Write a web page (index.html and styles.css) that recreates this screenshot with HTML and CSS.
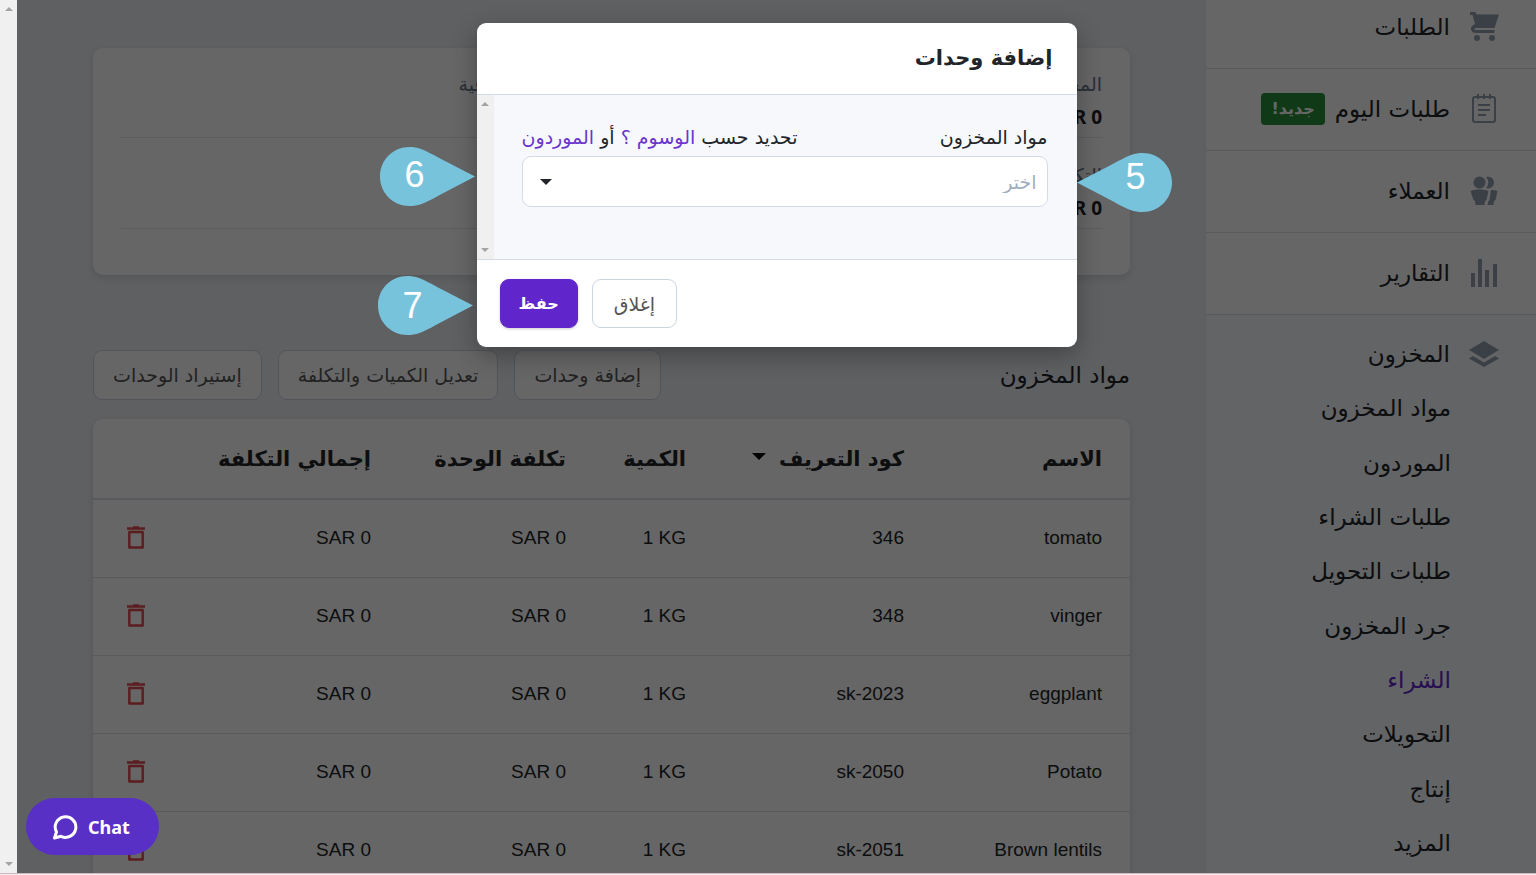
FILE: index.html
```html
<!DOCTYPE html>
<html lang="ar" dir="rtl">

<head>
  <meta charset="UTF-8">
  <meta name="viewport" content="width=device-width, initial-scale=1.0">
  <title>إضافة وحدات</title>
  <link rel="stylesheet" href="styles.css">
</head>

<body>
  <svg class="sprite" aria-hidden="true">
    <symbol id="trash" viewBox="0 0 20 24">
      <path d="M1 2.500h18M7 1.500h6" fill="none" stroke="currentColor" stroke-width="2.400"/>
      <path d="M3.300 6h13.400v15.500H3.300z" fill="none" stroke="currentColor" stroke-width="2.400" stroke-linejoin="round"/>
    </symbol>
    <symbol id="drop" viewBox="0 0 95 59">
      <path d="M95 29.500L63 13C54 8 46 4 41 2 37 .5 33 0 29.500 0 13 0 0 13 0 29.500S13 59 29.500 59c4 0 8-.5 12-2 5-2 13-6 22-11z" fill="#78c3dc"/>
    </symbol>
  </svg>

  <div class="app">
    <aside class="sidebar">
      <nav class="menu">
        <a class="menu-item" href="#">
          <svg class="icon" viewBox="0 0 30 30"><path d="M1 0h5.500l1 2.500H30L25.500 16H7c-2 0-2 2 0 2h18.500v3H7c-6 0-6.500-6.500-2.500-8L6 12 3.500 3H1z"/><circle cx="8" cy="26" r="3"/><circle cx="23" cy="26" r="3"/></svg>
          <span>الطلبات</span>
        </a>
        <a class="menu-item" href="#">
          <svg class="icon line" viewBox="0 0 30 30"><rect x="4" y="3" width="22" height="25" rx="2"/><path d="M9 0v5M15 0v5M21 0v5M9 11h12M9 16h12M9 21h8"/></svg>
          <span>طلبات اليوم</span>
          <span class="badge">جديد!</span>
        </a>
        <a class="menu-item" href="#">
          <svg class="icon" viewBox="0 0 30 30"><circle cx="10.500" cy="6.500" r="6"/><path d="M17 1c5-1.500 8 2 8 5.500s-3 7-8 5.500c3-3 3-8 0-11zM1.500 15c5-2 13-2 18 0l-2 9-1.500 1-.5 4h-9L6 25l-1.500-1zM22 14c2 0 4 0 6.500 1l-2 9-1.500 1-.5 4h-6l1-4 1-1z"/></svg>
          <span>العملاء</span>
        </a>
        <a class="menu-item" href="#">
          <svg class="icon" viewBox="0 0 30 30"><path d="M2 15h4v14H2zM9 1h4v28H9zM16 12h4v17h-4zM24 6h4v23h-4z"/></svg>
          <span>التقارير</span>
        </a>
      </nav>
      <nav class="submenu">
        <a class="submenu-head" href="#">
          <svg class="icon" viewBox="0 0 30 30"><path d="M15 2l15 9-15 9L0 11zM4 17l11 6.500L26 17l4 2.500L15 28 0 19.500z"/></svg>
          <span>المخزون</span>
        </a>
        <a href="#">مواد المخزون</a>
        <a href="#">الموردون</a>
        <a href="#">طلبات الشراء</a>
        <a href="#">طلبات التحويل</a>
        <a href="#">جرد المخزون</a>
        <a class="active" href="#">الشراء</a>
        <a href="#">التحويلات</a>
        <a href="#">إنتاج</a>
        <a href="#">المزيد</a>
      </nav>
    </aside>

    <main class="content">
      <section class="card summary">
        <dl class="summary-row">
          <div>
            <dt>المجموع الفرعي</dt>
            <dd dir="ltr">SAR 0</dd>
          </div>
          <div>
            <dt>التكاليف الإضافية</dt>
          </div>
        </dl>
        <dl class="summary-row">
          <div>
            <dt>التكلفة الإضافية</dt>
            <dd dir="ltr">SAR 0</dd>
          </div>
        </dl>
      </section>

      <header class="toolbar">
        <h2>مواد المخزون</h2>
        <div class="toolbar-buttons">
          <button class="btn" type="button">إضافة وحدات</button>
          <button class="btn" type="button">تعديل الكميات والتكلفة</button>
          <button class="btn" type="button">إستيراد الوحدات</button>
        </div>
      </header>

      <section class="card">
        <table class="items">
          <colgroup>
            <col class="col-name">
            <col>
            <col class="col-qty">
            <col class="col-unit">
            <col class="col-total">
            <col class="col-action">
          </colgroup>
          <thead>
            <tr>
              <th>الاسم</th>
              <th>كود التعريف <span class="caret sort"></span></th>
              <th>الكمية</th>
              <th>تكلفة الوحدة</th>
              <th>إجمالي التكلفة</th>
              <th></th>
            </tr>
          </thead>
          <tbody>
            <tr>
              <td>tomato</td>
              <td>346</td>
              <td><bdi>1 KG</bdi></td>
              <td><bdi>SAR 0</bdi></td>
              <td><bdi>SAR 0</bdi></td>
              <td><button class="delete" type="button" aria-label="حذف"><svg><use href="#trash"/></svg></button></td>
            </tr>
            <tr>
              <td>vinger</td>
              <td>348</td>
              <td><bdi>1 KG</bdi></td>
              <td><bdi>SAR 0</bdi></td>
              <td><bdi>SAR 0</bdi></td>
              <td><button class="delete" type="button" aria-label="حذف"><svg><use href="#trash"/></svg></button></td>
            </tr>
            <tr>
              <td>eggplant</td>
              <td><bdi>sk-2023</bdi></td>
              <td><bdi>1 KG</bdi></td>
              <td><bdi>SAR 0</bdi></td>
              <td><bdi>SAR 0</bdi></td>
              <td><button class="delete" type="button" aria-label="حذف"><svg><use href="#trash"/></svg></button></td>
            </tr>
            <tr>
              <td>Potato</td>
              <td><bdi>sk-2050</bdi></td>
              <td><bdi>1 KG</bdi></td>
              <td><bdi>SAR 0</bdi></td>
              <td><bdi>SAR 0</bdi></td>
              <td><button class="delete" type="button" aria-label="حذف"><svg><use href="#trash"/></svg></button></td>
            </tr>
            <tr>
              <td>Brown lentils</td>
              <td><bdi>sk-2051</bdi></td>
              <td><bdi>1 KG</bdi></td>
              <td><bdi>SAR 0</bdi></td>
              <td><bdi>SAR 0</bdi></td>
              <td><button class="delete" type="button" aria-label="حذف"><svg><use href="#trash"/></svg></button></td>
            </tr>
          </tbody>
        </table>
      </section>
    </main>

    <div class="scrollbar"><i class="up"></i><i class="down"></i></div>

    <div class="overlay">
      <div class="modal" role="dialog" aria-labelledby="modal-title">
        <h1 class="modal-header" id="modal-title">إضافة وحدات</h1>
        <div class="modal-body">
          <form class="modal-form">
            <div class="field-head">
              <label for="item">مواد المخزون</label>
              <span>تحديد حسب <a href="#">الوسوم ؟</a> أو <a href="#">الموردون</a></span>
            </div>
            <div class="select">
              <select id="item">
                <option>اختر</option>
              </select>
              <span class="caret"></span>
            </div>
          </form>
          <div class="scrollbar"><i class="up"></i><i class="down"></i></div>
        </div>
        <div class="modal-footer">
          <button class="btn" type="button">إغلاق</button>
          <button class="btn primary" type="button">حفظ</button>
        </div>

        <div class="pin pin-5"><svg><use href="#drop"/></svg><b>5</b></div>
        <div class="pin pin-6"><svg><use href="#drop"/></svg><b>6</b></div>
        <div class="pin pin-7"><svg><use href="#drop"/></svg><b>7</b></div>
      </div>
    </div>

    <button class="chat" type="button" dir="ltr">
      <svg viewBox="0 0 26 26"><path d="M4.500 18A10.300 10.300 0 1 1 9 22.300L2.500 24z" fill="none" stroke="#fff" stroke-width="3" stroke-linejoin="round"/></svg>
      Chat
    </button>
  </div>
</body>

</html>
```

FILE: styles.css
```css
* {
  box-sizing: border-box;
}

body {
  margin: 0;
  height: 100vh;
  overflow: hidden;
  padding-bottom: 1px;
  background: #fdebea;
  color: #212529;
  font-family: "DejaVu Sans", sans-serif;
  font-size: 19px;
}

a {
  color: inherit;
  text-decoration: none;
}

button,
select {
  font: inherit;
}

.sprite {
  display: none;
}

.app {
  position: relative;
  display: flex;
  height: 100%;
  overflow: hidden;
  background: #eef0f5;
  border-bottom: 1px solid #c9bcc4;
}

/* sidebar */
.sidebar {
  display: flex;
  flex-direction: column;
  width: 331px;
  margin-top: -13px;
  background: #fff;
  border-left: 1px solid #e6e8ee;
  font-size: 23px;
}

.menu-item {
  display: flex;
  align-items: center;
  gap: 19px;
  height: 82px;
  padding: 0 37px 2px 0;
  border-bottom: 1px solid #dfe0ea;
}

.icon {
  width: 30px;
  height: 30px;
  fill: #94a0b0;
}

.icon.line {
  fill: none;
  stroke: #94a0b0;
  stroke-width: 2;
}

.badge {
  margin-right: -9px;
  padding: 0 10px;
  border-radius: 4px;
  background: #28903c;
  color: #fff;
  font-size: 16px;
  font-weight: bold;
  line-height: 32px;
}

.submenu {
  flex: 1;
  display: grid;
  grid-auto-rows: 1fr;
  align-items: center;
  padding: 12px 85px 3px 0;
  background: #f8fafe;
}

.submenu-head {
  display: flex;
  align-items: center;
  gap: 19px;
  margin-right: -48px;
}

.submenu .active {
  color: #6026cc;
}

/* page content */
.content {
  flex: 1;
  padding: 48px 75px 0 76px;
}

.card {
  border-radius: 10px;
  background: #fff;
  box-shadow: 0 3px 8px rgba(0, 0, 0, .12);
}

.summary {
  padding: 0 28px 46px;
}

.summary-row {
  display: grid;
  grid-template-columns: 52% 1fr;
  height: 91px;
  margin: 0;
  padding-top: 21px;
  border-bottom: 1px solid #e4e5ee;
}

.summary-row:first-child {
  height: 90px;
  padding-top: 20px;
}

.summary-row dt {
  line-height: 32px;
  color: #68758c;
}

.summary-row dd {
  margin: 0;
  text-align: right;
  font-family: "Noto Sans", sans-serif;
  font-weight: bold;
  line-height: 34px;
}

.toolbar {
  display: flex;
  justify-content: space-between;
  align-items: center;
  margin: 75px 0 19px;
}

.toolbar h2 {
  margin: 0;
  font-size: 23px;
  font-weight: normal;
}

.toolbar-buttons {
  display: flex;
  gap: 16px;
}

.btn {
  height: 50px;
  padding: 0 19px;
  border: 1px solid #cbd5e0;
  border-radius: 9px;
  background: #fff;
  color: #555;
}

.items {
  width: 100%;
  table-layout: fixed;
  border-collapse: collapse;
}

.items th,
.items td {
  height: 78px;
  padding: 0 28px 0 0;
  border-bottom: 1px solid #dfe0ea;
  text-align: right;
  white-space: nowrap;
}

.items td {
  font-family: "Liberation Sans", Arial, sans-serif;
}

.items th {
  height: 80px;
  border-bottom-width: 2px;
  font-size: 21px;
}

.col-name {
  width: 198px;
}

.col-qty {
  width: 120px;
}

.col-unit {
  width: 195px;
}

.col-total {
  width: 225px;
}

.col-action {
  width: 81px;
}

.caret {
  display: inline-block;
  border: 7px solid transparent;
  border-top: 7px solid #000;
  border-bottom: 0;
}

.sort {
  margin-right: 6px;
  vertical-align: 6px;
}

.delete {
  display: block;
  padding: 0;
  border: 0;
  background: none;
  color: #e3494f;
}

.delete svg {
  display: block;
  width: 20px;
  height: 24px;
}

/* scrollbar tracks */
.scrollbar {
  display: flex;
  flex-direction: column;
  justify-content: space-between;
  align-items: center;
  width: 17px;
  padding: 7px 0;
  background: #f0f0f0;
}

.scrollbar i {
  border: 4px solid transparent;
}

.scrollbar .up {
  border-top: 0;
  border-bottom-color: #a3a3a3;
}

.scrollbar .down {
  border-bottom: 0;
  border-top-color: #a3a3a3;
}

/* modal */
.overlay {
  position: absolute;
  inset: 0 0 0 17px;
  display: flex;
  justify-content: center;
  align-items: flex-start;
  padding-top: 23px;
  background: rgba(0, 0, 0, .6);
}

.modal {
  position: relative;
  width: 600px;
  border-radius: 9px;
  background: #fff;
  box-shadow: 0 8px 24px rgba(0, 0, 0, .3);
}

.modal-header {
  margin: 0;
  padding: 0 24px;
  border-bottom: 1px solid #d5dae8;
  font-size: 21px;
  line-height: 71px;
}

.modal-body {
  display: flex;
  border-bottom: 1px solid #d5dae8;
  background: #f7f8fc;
}

.modal-form {
  flex: 1;
  padding: 24px 29px 52px 28px;
}

.field-head {
  display: flex;
  justify-content: space-between;
  line-height: 37px;
}

.field-head a {
  color: #6a35cc;
}

.select {
  position: relative;
}

.select select {
  display: block;
  width: 100%;
  height: 51px;
  padding: 0 10px;
  appearance: none;
  border: 1px solid #d5dae8;
  border-radius: 9px;
  background: #fff;
  color: #a0aec0;
}

.select .caret {
  position: absolute;
  top: 23px;
  left: 18px;
  border-width: 6px 6px 0;
  border-top-color: #212529;
  pointer-events: none;
}

.modal-footer {
  display: flex;
  justify-content: flex-end;
  gap: 14px;
  padding: 19px 23px;
}

.modal-footer .btn {
  height: 49px;
  padding: 0 21px;
}

.modal-footer .primary {
  padding: 0 18px;
  border-color: #6026cc;
  background: #6026cc;
  color: #fff;
  font-size: 16px;
  font-weight: bold;
  box-shadow: 0 1px 3px rgba(0, 0, 0, .2);
}

/* numbered callouts */
.pin {
  position: absolute;
  width: 95px;
  height: 59px;
}

.pin svg {
  display: block;
  width: 95px;
  height: 59px;
}

.pin b {
  position: absolute;
  top: 0;
  left: 0;
  width: 70px;
  color: #fff;
  font-family: "Liberation Sans", Arial, sans-serif;
  font-size: 36px;
  font-weight: normal;
  line-height: 56px;
  text-align: center;
}

.pin-5 {
  top: 130px;
  left: 600px;
}

.pin-5 svg {
  transform: scaleX(-1);
}

.pin-5 b {
  left: 24px;
  line-height: 48px;
}

.pin-6 {
  top: 124px;
  left: -97px;
}

.pin-7 {
  top: 253px;
  left: -99px;
}

.pin-7 b {
  line-height: 59px;
}

.chat {
  position: absolute;
  bottom: 18px;
  left: 26px;
  display: flex;
  align-items: center;
  gap: 10px;
  height: 57px;
  padding: 0 29px 0 26px;
  border: 0;
  border-radius: 29px;
  background: #5930c5;
  color: #fff;
  font-family: "Noto Sans", sans-serif;
  font-size: 18px;
  font-weight: bold;
}

.chat svg {
  width: 26px;
  height: 26px;
}
```
